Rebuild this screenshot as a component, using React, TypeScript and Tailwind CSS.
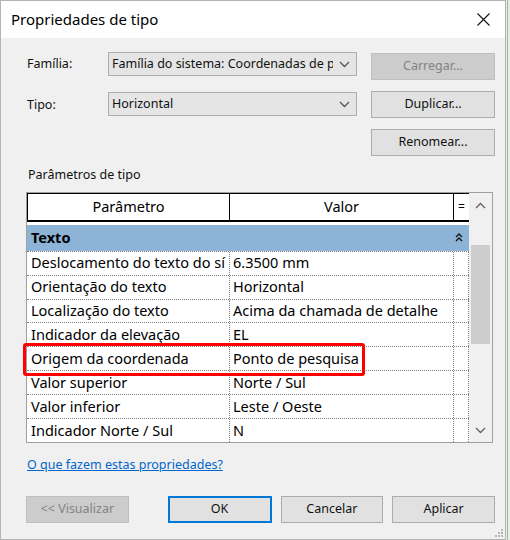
import type { ReactNode } from "react";

const font = { fontFamily: '"Noto Sans", "Open Sans", sans-serif' };

function Chevron({ up = false, className = "" }: { up?: boolean; className?: string }) {
  return (
    <svg width="11" height="7" viewBox="0 0 11 7" className={className}>
      <path
        d={up ? "M1 6 L5.5 1.5 L10 6" : "M1 1 L5.5 5.5 L10 1"}
        fill="none"
        stroke="currentColor"
        strokeWidth="1.3"
      />
    </svg>
  );
}

function Combo({ children }: { children: ReactNode }) {
  return (
    <div className="w-[249px] h-[24px] border border-[#adadad] bg-[#e5e5e5] flex items-center pl-[3px] pr-[6px] text-[12.5px] text-[#111]">
      <span className="flex-1 overflow-hidden whitespace-nowrap">{children}</span>
      <Chevron className="text-[#555] ml-[6px] shrink-0" />
    </div>
  );
}

function Btn({
  children,
  disabled = false,
  primary = false,
  className = "",
}: {
  children: ReactNode;
  disabled?: boolean;
  primary?: boolean;
  className?: string;
}) {
  const look = disabled
    ? "bg-[#cccccc] border border-[#bfbfbf] text-[#838383]"
    : primary
      ? "bg-[#e1e1e1] border-2 border-[#0078d7] text-[#111]"
      : "bg-[#e1e1e1] border border-[#adadad] text-[#111]";
  return (
    <div className={`h-[27px] flex items-center justify-center text-[12.5px] ${look} ${className}`}>
      {children}
    </div>
  );
}

const rows: [string, string][] = [
  ["Deslocamento do texto do sí", "6.3500 mm"],
  ["Orientação do texto", "Horizontal"],
  ["Localização do texto", "Acima da chamada de detalhe"],
  ["Indicador da elevação", "EL"],
  ["Origem da coordenada", "Ponto de pesquisa"],
  ["Valor superior", "Norte / Sul"],
  ["Valor inferior", "Leste / Oeste"],
  ["Indicador Norte / Sul", "N"],
];

const dotted = "border-dotted border-[#808080]";

export default function App() {
  return (
    <div className="w-[510px] h-[540px] bg-[#e8ebe8] flex" style={font}>
      <div className="w-[506px] h-[540px] border border-[#b4b4b4] flex flex-col bg-[#f0f0f0] relative">
        {/* title bar */}
        <div className="h-[37px] bg-white flex items-center justify-between pl-[10px] pr-[15px] shrink-0">
          <span className="text-[15px] text-black">Propriedades de tipo</span>
          <svg width="13" height="13" viewBox="0 0 13 13">
            <path d="M0.5 0.5 L12.5 12.5 M12.5 0.5 L0.5 12.5" stroke="#111" strokeWidth="1.1" />
          </svg>
        </div>

        <div className="flex flex-col pl-[25px] pr-[10px] text-[12.5px] text-[#111]">
          <div className="flex items-start mt-[14px]">
            <span className="w-[82px] pl-[1px] h-[24px] leading-[24px]">Família:</span>
            <Combo>Família do sistema: Coordenadas de p</Combo>
            <Btn disabled className="ml-[14px] mt-[1px] w-[124px]">Carregar...</Btn>
          </div>
          <div className="flex items-start mt-[11px]">
            <span className="w-[82px] pl-[1px] h-[24px] leading-[26px] mt-[1px]">Tipo:</span>
            <div className="mt-[1px]">
              <Combo>Horizontal</Combo>
            </div>
            <Btn className="ml-[14px] w-[124px]">Duplicar...</Btn>
          </div>
          <div className="flex justify-end mt-[11px]">
            <Btn className="w-[124px]">Renomear...</Btn>
          </div>

          <div className="mt-[10px] pl-[2px] h-[18px] leading-[18px]">Parâmetros de tipo</div>

          {/* property grid */}
          <div className="mt-[8px] w-[467px] h-[251px] border border-[#a0a0a0] flex bg-[#f0f0f0] text-[14.5px] text-black">
            <div className="w-[442px] flex flex-col bg-white">
              <div className="flex h-[29px] border-t border-l border-black border-b-2 bg-white">
                <div className="w-[202px] border-r border-black flex items-center justify-center">Parâmetro</div>
                <div className="w-[224px] border-r border-black flex items-center justify-center">Valor</div>
                <div className="flex-1 flex items-center justify-center text-[12px]">=</div>
              </div>
              <div className="h-[3px]" />
              <div className="h-[26px] bg-[#8db3d6] flex items-center justify-between pl-[4px] pr-[6px] font-bold">
                <span>Texto</span>
                <svg width="8" height="9" viewBox="0 0 8 9">
                  <path d="M1 4 L4 1 L7 4 M1 8 L4 5 L7 8" fill="none" stroke="#111" strokeWidth="1.3" />
                </svg>
              </div>
              {rows.map(([p, v]) => (
                <div key={p} className={`flex h-[24px] border-t ${dotted}`}>
                  <div className={`w-[203px] border-r ${dotted} pl-[4px] flex items-center whitespace-nowrap overflow-hidden`}>
                    {p}
                  </div>
                  <div className={`w-[224px] border-r ${dotted} pl-[3px] flex items-center whitespace-nowrap overflow-hidden`}>
                    {v}
                  </div>
                  <div className={`flex-1 border-r ${dotted}`} />
                </div>
              ))}
            </div>
            <div className="w-[21px] flex flex-col items-center bg-[#f0f0f0] ml-[1px]">
              <Chevron up className="text-[#606060] mt-[9px]" />
              <div className="w-[19px] h-[99px] bg-[#cdcdcd] mt-[36px]" />
              <div className="flex-1" />
              <Chevron className="text-[#606060] mb-[8px]" />
            </div>
          </div>

          <div className="mt-[13px] pl-[1px] h-[17px] leading-[17px] text-[#0066cc] underline">
            O que fazem estas propriedades?
          </div>

          <div className="flex mt-[23px] gap-[9px]">
            <Btn disabled className="w-[103px]">&lt;&lt; Visualizar</Btn>
            <Btn primary className="w-[104px] ml-[30px]">OK</Btn>
            <Btn className="w-[103px]">Cancelar</Btn>
            <Btn className="w-[103px]">Aplicar</Btn>
          </div>
        </div>

        {/* resize grip */}
        <svg width="10" height="10" viewBox="0 0 10 10" className="absolute right-[1px] bottom-[1px]">
          <g fill="#b8b8b8">
            <rect x="7" y="1" width="2" height="2" />
            <rect x="4" y="4" width="2" height="2" />
            <rect x="7" y="4" width="2" height="2" />
            <rect x="1" y="7" width="2" height="2" />
            <rect x="4" y="7" width="2" height="2" />
            <rect x="7" y="7" width="2" height="2" />
          </g>
        </svg>

        {/* red annotation */}
        <div className="absolute left-[22px] top-[342px] w-[342px] h-[33px] border-[3px] border-[#ff0000] rounded-[3px]" />
      </div>
      <div className="w-px h-[540px] ml-[1px] bg-[#8fc98f]" />
    </div>
  );
}
